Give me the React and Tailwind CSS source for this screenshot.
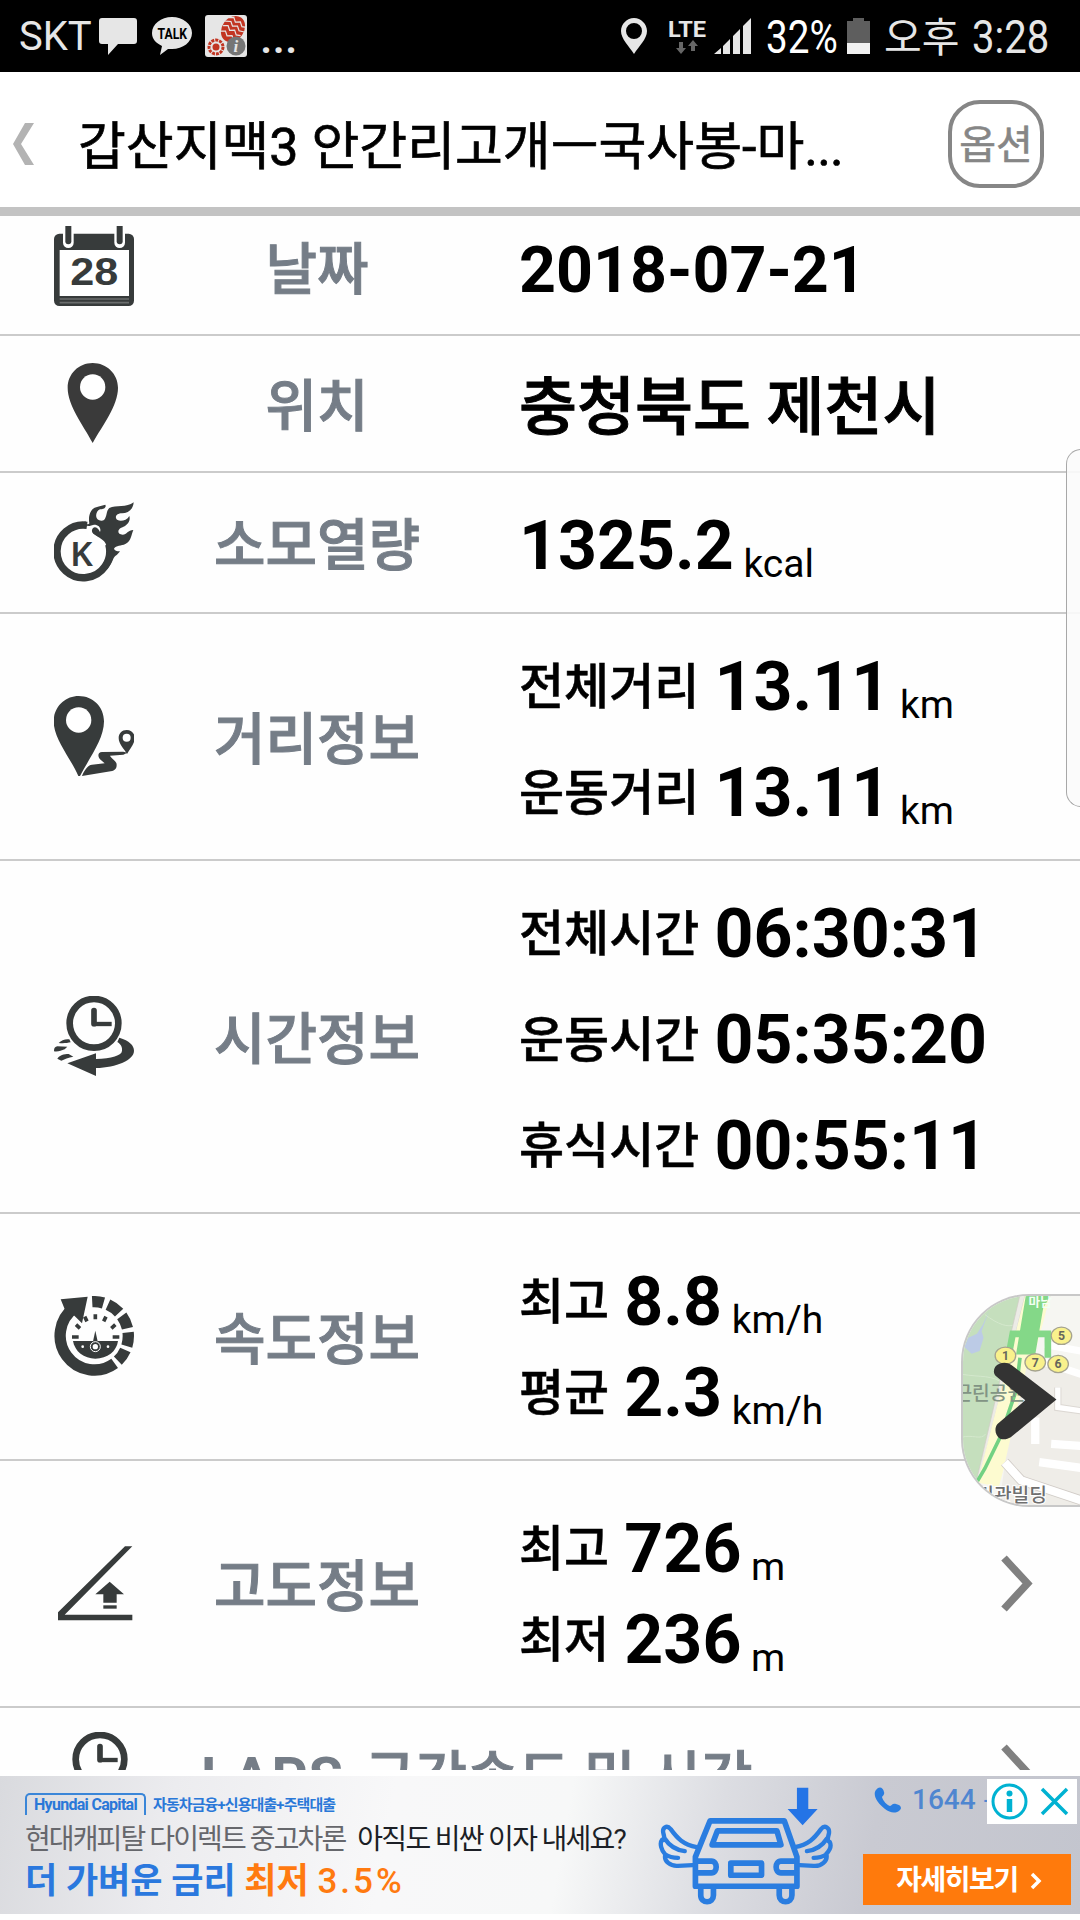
import React from "react";
import { clsx } from "clsx";

const INK = "#373b3b";

/* Arc between two angles, measured clockwise from 12 o'clock */
const arc = (cx, cy, r, from, to) => {
  const point = (deg) => {
    const rad = ((deg - 90) * Math.PI) / 180;
    return `${(cx + r * Math.cos(rad)).toFixed(1)} ${(cy + r * Math.sin(rad)).toFixed(1)}`;
  };
  const large = to - from > 180 ? 1 : 0;
  return `M${point(from)} A${r} ${r} 0 ${large} 1 ${point(to)}`;
};

const CalendarIcon = () => (
  <svg viewBox="0 0 240 240" className="size-20">
    <rect x="0" y="23" width="240" height="217" rx="16" fill={INK} />
    <rect x="17" y="72" width="208" height="138" fill="#fff" />
    <path d="M17 219H225M17 230H225" stroke="#6b6e6e" strokeWidth="5" />
    {[43, 197].map((x) => (
      <g key={x} strokeLinecap="round">
        <path d={`M${x} -20V50`} stroke="#fff" strokeWidth="32" />
        <path d={`M${x} -20V46`} stroke={INK} strokeWidth="18" />
      </g>
    ))}
    <text
      x="49"
      y="178"
      fontSize="116"
      textLength="144"
      lengthAdjust="spacingAndGlyphs"
      fill={INK}
      className="font-['Liberation_Sans',sans-serif] font-bold"
    >
      28
    </text>
  </svg>
);

const PinIcon = () => (
  <svg viewBox="0 0 240 240" className="size-20">
    <path
      d="M116 0C158 0 192 33 192 74C192 128 146 186 116 240C88 186 41 128 41 74C41 33 74 0 116 0Z"
      fill="#3a3a3a"
    />
    <circle cx="116" cy="72" r="38" fill="#fff" />
  </svg>
);

const CalorieIcon = () => (
  <svg viewBox="0 0 240 240" className="size-20">
    <path d={arc(88, 148, 79, 76, 368)} fill="none" stroke={INK} strokeWidth="22" />
    <path
      d="M94 56C84 62 102 72 106 64C104 52 104 38 112 26C122 12 138 14 154 8C158 16 150 22 138 22C128 26 124 40 128 48C132 56 144 58 150 54C160 44 156 26 166 18C186 8 218 18 239 1C238 22 222 34 204 34C192 34 184 40 186 48C188 60 216 60 226 42C232 62 212 74 200 78C190 84 190 98 206 98C218 98 222 84 238 84C232 96 232 118 214 126C202 132 186 130 180 140C184 148 192 148 198 148C190 160 184 160 178 170C172 186 162 202 152 206L154 176L160 140C150 122 144 114 136 112C126 98 112 98 114 84C118 70 132 76 138 90C142 80 136 68 120 68C108 70 100 78 96 70Z"
      fill={INK}
    />
    <path d="M104 72C100 90 112 100 126 106C134 112 150 118 152 130" fill="none" stroke="#fff" strokeWidth="9" />
    <text
      x="52"
      y="192"
      fontSize="104"
      textLength="66"
      lengthAdjust="spacingAndGlyphs"
      fill={INK}
      className="font-['Liberation_Sans',sans-serif] font-bold"
    >
      K
    </text>
  </svg>
);

const DistanceIcon = () => (
  <svg viewBox="0 0 240 240" className="size-20" fill={INK}>
    <path d="M74 0C117 0 150 33 150 76C150 130 106 186 78 240H73C50 186 -1 130 -1 76C-1 33 33 0 74 0Z" />
    <circle cx="74" cy="72" r="38" fill="#fff" />
    <path d="M84 240C90 224 102 206 114 206L152 202L138 190C130 180 132 168 144 168L208 167L220 170L208 176L168 179C172 188 188 194 188 206C188 218 184 222 170 226L84 240Z" />
    <path d="M218 102C232 102 242 112 242 126C242 144 228 158 219 174C210 158 194 144 194 126C194 112 204 102 218 102Z" />
    <circle cx="218" cy="125" r="12" fill="#fff" />
  </svg>
);

const TimeIcon = () => (
  <svg viewBox="0 0 240 240" className="size-20" fill={INK}>
    <circle cx="120" cy="82" r="73" fill="none" stroke={INK} strokeWidth="20" />
    <path d="M120 44V83" stroke={INK} strokeWidth="17" strokeLinecap="round" />
    <path d="M118 84H173" stroke={INK} strokeWidth="13" />
    <path d="M196 125C226 134 240 148 240 164C240 192 188 214 126 216V240L40 202L126 172V189C172 188 204 178 204 164C206 154 200 144 190 138Z" />
    <path d="M14 141C22 133 34 128 46 130L50 139C40 141 28 143 14 141ZM0 164C0 156 4 152 10 151L40 152L32 160C22 164 12 168 0 166ZM10 188C16 178 30 174 44 174L58 182C44 184 30 190 22 194Z" />
  </svg>
);

const SpeedIcon = () => (
  <svg viewBox="0 0 240 240" className="size-20">
    <g fill="none" stroke={INK} strokeWidth="34">
      <path d={arc(120, 120, 103, 143, 325)} />
      <path d={arc(120, 120, 103, -3, 16)} />
      <path d={arc(120, 120, 103, 24, 47)} />
      <path d={arc(120, 120, 103, 54, 77)} />
      <path d={arc(120, 120, 103, 84, 107)} />
      <path d={arc(120, 120, 103, 114, 136)} />
    </g>
    <path d="M20 10L101 2L84 82L58 56L42 64Z" fill={INK} />
    <path d="M57 135H192C188 166 160 188 124 188C90 188 62 166 57 135Z" fill={INK} />
    <g stroke={INK} strokeWidth="11">
      <path d="M124 55V70M92 62L99 76M156 62L149 76M66 86L78 97M184 86L172 97M54 123H74M176 123H196" />
    </g>
    <path d="M124 104L134 150H114Z" fill={INK} />
    <circle cx="124" cy="152" r="15" fill={INK} stroke="#fff" strokeWidth="3" />
    <circle cx="124" cy="152" r="8" fill="#fff" />
    <circle cx="86" cy="152" r="4" fill="#fff" />
    <circle cx="162" cy="152" r="4" fill="#fff" />
  </svg>
);

const AltitudeIcon = () => (
  <svg viewBox="0 0 240 240" className="size-20" fill={INK}>
    <path d="M12 232V208L213 10H235L32 215H235V232Z" />
    <path d="M167 116L210 154H188V179H148V154H124Z" />
    <rect x="148" y="187" width="40" height="10" />
  </svg>
);

const ChevronIcon = () => (
  <svg viewBox="0 0 34 60" className="h-15 w-[34px]">
    <path d="M4 5L27.500 30.500L4 56" fill="none" stroke="#808080" strokeWidth="7.500" />
  </svg>
);

const ROWS = [
  { icon: CalendarIcon, label: "날짜", height: "h-[137px]", lines: [{ value: "2018-07-21", style: "text-[64.5px] font-bold" }] },
  {
    icon: PinIcon,
    label: "위치",
    height: "h-[137px]",
    lines: [{ value: "충청북도 제천시", style: "pt-0.5 text-[63px] font-medium [-webkit-text-stroke:1px_black]" }],
  },
  { icon: CalorieIcon, label: "소모열량", height: "h-[141px]", lines: [{ value: "1325.2", unit: "kcal" }] },
  {
    icon: DistanceIcon,
    label: "거리정보",
    height: "h-[247px]",
    lines: [
      { name: "전체거리", value: "13.11", unit: "km" },
      { name: "운동거리", value: "13.11", unit: "km" },
    ],
  },
  {
    icon: TimeIcon,
    label: "시간정보",
    height: "h-[353px]",
    lines: [
      { name: "전체시간", value: "06:30:31" },
      { name: "운동시간", value: "05:35:20" },
      { name: "휴식시간", value: "00:55:11" },
    ],
  },
  {
    icon: SpeedIcon,
    label: "속도정보",
    height: "h-[247px]",
    compact: true,
    lines: [
      { name: "최고", value: "8.8", unit: "km/h" },
      { name: "평균", value: "2.3", unit: "km/h" },
    ],
  },
  {
    icon: AltitudeIcon,
    label: "고도정보",
    height: "h-[247px]",
    compact: true,
    link: true,
    lines: [
      { name: "최고", value: "726", unit: "m" },
      { name: "최저", value: "236", unit: "m" },
    ],
  },
];

const InfoRow = ({ row }) => {
  const Icon = row.icon;
  return (
    <div className={clsx("flex shrink-0 items-center border-b-2 border-[#cbcbcb] pb-px", row.height)}>
      <div className="w-[188px] pl-[54px]">
        <Icon />
      </div>
      <div className="w-[258px] pt-[7px] text-center text-[56px] leading-none font-medium text-[#757d87] [-webkit-text-stroke:1px_#757d87]">
        {row.label}
      </div>
      <div className={clsx("flex-1 pl-[73px] whitespace-pre", row.compact ? "pt-[23px]" : "pt-[7px]")}>
        {row.lines.map((line, index) => (
          <p
            key={index}
            className={clsx(line.style || "text-[68px] font-bold", row.compact ? "leading-[91px]" : "leading-[106px]")}
          >
            {line.name && (
              <span className="mr-[3px] align-[6px] text-[49px] leading-none font-medium [-webkit-text-stroke:0.5px_black]">
                {line.name}{" "}
              </span>
            )}
            {line.value}
            {line.unit && <span className="align-[-8px] text-[39px] leading-none font-normal"> {line.unit}</span>}
          </p>
        ))}
      </div>
      {row.link && (
        <div className="pr-[46px]">
          <ChevronIcon />
        </div>
      )}
    </div>
  );
};

const StatusBar = () => (
  <div className="flex h-18 shrink-0 items-center bg-black pl-[19px] text-[#e6e6e6]">
    <span className="w-20 pt-0.5 text-[40px] leading-[70px]">SKT</span>
    <svg viewBox="0 0 38 38" className="mt-0.5 h-[38px] w-[38px] fill-[#e6e6e6]">
      <path d="M3 0H35Q38 0 38 3V23Q38 26 35 26H19L9 37V26H3Q0 26 0 23V3Q0 0 3 0Z" />
    </svg>
    <svg viewBox="0 0 40 40" className="ml-[15px] h-10 w-10">
      <path d="M20 1C31 1 40 8 40 17C40 26 31 33 20 33L16 33L8 39L10 30C4 27 0 23 0 17C0 8 9 1 20 1Z" fill="#e6e6e6" />
      <text x="5.500" y="22.500" fontSize="15" textLength="29.500" lengthAdjust="spacingAndGlyphs" className="font-bold">
        TALK
      </text>
    </svg>
    <svg viewBox="0 0 42 42" className="ml-[13px] size-[42px]">
      <rect width="42" height="42" rx="3" fill="#e6e6e6" />
      <g transform="rotate(35 28 14)">
        <ellipse cx="28" cy="14" rx="11" ry="14" fill="#c23522" />
        <path
          d="M18 7L22 4L26 7L30 4L34 7L38 5M17 12L22 9L26 12L30 9L34 12L39 10M18 17L22 14L26 17L30 14L34 17L38 15M19 23L23 20L27 23L31 20L35 23"
          fill="none"
          stroke="#e6e6e6"
          strokeWidth="1.200"
        />
      </g>
      <circle cx="11" cy="32" r="7" fill="none" stroke="#c23522" strokeWidth="3" strokeDasharray="3 1" />
      <circle cx="11" cy="32" r="3.500" fill="#c23522" />
      <circle cx="31" cy="31" r="9.500" fill="#757575" />
      <text x="28.500" y="37" fontSize="17" fill="#e6e6e6" className="font-['Liberation_Serif',serif] font-bold italic">
        i
      </text>
    </svg>
    <span className="ml-[13px] pt-1 text-[45px] leading-[68px] font-medium">...</span>

    <div className="ml-auto flex items-center pr-8">
      <svg viewBox="0 0 26 36" className="h-9 w-[26px]">
        <path
          d="M13 0C20 0 26 6 26 13C26 21 18 28 13 36C8 28 0 21 0 13C0 6 6 0 13 0ZM13 5A8 8 0 1 0 13 21A8 8 0 1 0 13 5Z"
          fill="#e6e6e6"
        />
      </svg>
      <div className="ml-[21px] flex w-[38px] flex-col items-center gap-[3px] pt-px">
        <svg viewBox="0 0 38 17" className="h-[17px] w-[38px] overflow-visible">
          <text
            x="0"
            y="16.500"
            fontSize="22.500"
            textLength="38"
            lengthAdjust="spacingAndGlyphs"
            fill="#e6e6e6"
            className="font-bold"
          >
            LTE
          </text>
        </svg>
        <svg viewBox="0 0 22 14" className="h-3.5 w-[22px] fill-[#666]">
          <path d="M3 2H7V8H10L5 14L0 8H3ZM15 11H19V6H22L17 0L12 6H15Z" />
        </svg>
      </div>
      <svg viewBox="0 0 37 36" className="ml-2 h-9 w-[37px] fill-[#e6e6e6]">
        <path d="M0 36L7 30V36ZM9 28L16 21V36H9ZM19 18L26 11V36H19ZM29 8L37 0V36H29Z" />
      </svg>
      <span className="ml-[15px] w-[75px] pt-0.5 text-[46px] leading-[70px] text-white">
        <span className="inline-block origin-left scale-x-[0.840]">32%</span>
      </span>
      <svg viewBox="0 0 23 36" className="ml-1.5 h-9 w-[23px]">
        <path d="M6 0H17V3H23V36H0V3H6Z" fill="#5e5e5e" />
        <path d="M0 25H23V36H0Z" fill="#f0f0f0" />
      </svg>
      <span className="ml-[14px] w-[88px] pt-1 text-[41px] leading-[68px]">오후</span>
      <span className="w-[76px] pt-0.5 text-[46px] leading-[70px]">
        <span className="inline-block origin-left scale-x-[0.870]">3:28</span>
      </span>
    </div>
  </div>
);

const Header = () => (
  <div className="flex h-36 shrink-0 items-center border-b-[9px] border-[#c3c3c3] bg-white pt-[9px] pr-9 pl-[13px]">
    <svg viewBox="0 0 21 42" className="h-[42px] w-[21px] fill-[#b3b3b3]">
      <path d="M12 0H21L8 21L21 42H12L0 21Z" />
    </svg>
    <h1 className="ml-11 flex-1 pt-2 text-[52px] leading-none whitespace-nowrap [-webkit-text-stroke:0.7px_black]">
      갑산지맥3 안간리고개ㅡ국사봉-마<span className="tracking-[-0.800px]">...</span>
    </h1>
    <button className="flex h-[88px] w-24 items-center justify-center rounded-[32px] border-4 border-[#868686] pt-1 text-[40px] leading-none text-[#868686] [-webkit-text-stroke:0.6px_#868686]">
      옵션
    </button>
  </div>
);

const STATIONS = [
  { n: 5, x: 301, y: 124 },
  { n: 1, x: 132, y: 184 },
  { n: 7, x: 222, y: 204 },
  { n: 6, x: 291, y: 209 },
];

const MapTab = () => (
  <div className="absolute top-[1294px] right-0 h-[213px] w-[119px] overflow-hidden rounded-l-[68px] border-2 border-r-0 border-[#c8c8c8] bg-[#f6f6f2]">
    <svg viewBox="4 4 353 630" className="h-full w-full" preserveAspectRatio="none">
      <path d="M0 0H182L44 600L0 640Z" fill="#c5dfbd" />
      <path d="M82 50L64 90L46 118L20 130L8 158L30 178L54 170L66 130L60 110Z" fill="#bccbe6" />
      <path d="M70 60C110 90 140 100 160 90M0 240C60 250 90 240 130 270M0 430C30 420 60 440 72 420" fill="none" stroke="#d4e8cd" strokeWidth="3" />
      <path d="M176 0H192L50 570L40 580Z" fill="#ecebe6" stroke="#cfcac4" strokeWidth="2" />
      <path d="M192 0H268L112 580L48 566Z" fill="#fdfbd0" />
      <path d="M200 200L360 236V640H112L132 500Z" fill="#efede8" />
      <path d="M250 150L360 170M240 200L360 240" stroke="#fff" strokeWidth="22" />
      <path d="M130 505L180 560L360 620" fill="none" stroke="#d2cdc8" strokeWidth="30" />
      <path d="M290 280V340L360 350" fill="none" stroke="#dcd8d3" strokeWidth="22" />
      <path d="M130 505L180 560L360 620M222 370V450M270 450L360 456M234 505L360 522" fill="none" stroke="#fff" strokeWidth="25" />
      <path d="M290 280V340L360 350" fill="none" stroke="#fff" strokeWidth="16" />
      <path d="M176 190L164 290L116 430L70 524L44 568" fill="none" stroke="#72d183" strokeWidth="11" />
      <path d="M194 0H270L246 40L222 180H164Z" fill="#84d888" />
      <path d="M142 182L154 118H260V190" fill="none" stroke="#84d888" strokeWidth="20" />
      <g className="font-['Noto_Sans_CJK_KR',sans-serif]">
        <text x="202" y="34" fontSize="38" fill="#f4fff4" className="font-bold">
          마남
        </text>
        <text x="-22" y="316" fontSize="58" fill="#829484" className="font-medium">
          근린공원
        </text>
        <text x="44" y="626" fontSize="58" fill="#6f6f6f" stroke="#fff" strokeWidth="6" paintOrder="stroke" className="font-medium">
          리관빌딩
        </text>
      </g>
      {STATIONS.map(({ n, x, y }) => (
        <g key={n}>
          <ellipse cx={x} cy={y} rx="31" ry="26" fill="#f9f18c" stroke="#a5a38e" strokeWidth="4" />
          <text x={x} y={y + 13} fontSize="37" textAnchor="middle" fill="#66665c" className="font-bold">
            {n}
          </text>
        </g>
      ))}
      <path
        d="M114 208C96 214 92 236 104 246L192 318L108 390C98 402 100 424 116 434C126 438 138 436 148 430L286 316L150 212C138 204 126 204 114 208Z"
        fill="#333"
      />
    </svg>
  </div>
);

const CarIcon = () => (
  <svg viewBox="24 40 524 362" className="h-[121px] w-[175px]" fill="none" stroke="#2a7de0" strokeWidth="17" strokeLinejoin="round" strokeLinecap="round">
    <path d="M440 48H474V112H502L457 160L412 112H440Z" fill="#2474e6" stroke="none" />
    <path d="M180 147H402L440 255V343H136V255Z" />
    <path d="M202 177H380L392 219H186Z" />
    <path d="M138 268H184C203 268 203 303 184 303H138M438 268H392C373 268 373 303 392 303H438" />
    <rect x="242" y="274" width="92" height="36" />
    <path d="M152 348V370C152 396 190 396 190 370V348M387 348V370C387 396 425 396 425 370V348" />
    <path
      d="M140 226C100 218 82 200 62 172C50 158 36 168 40 184C44 200 46 208 36 204C28 214 34 236 46 248C40 268 62 284 84 282L128 280M44 200C58 222 74 234 104 238M46 248C58 256 68 258 84 258M434 226C474 218 492 200 512 172C524 158 538 168 536 184C532 200 530 208 538 210C544 222 538 236 528 246C534 268 512 284 490 282L448 280M530 200C516 222 500 234 470 238M528 248C516 256 506 258 490 258"
      strokeWidth="13"
    />
  </svg>
);

const AdBanner = () => (
  <div className="relative mt-1.5 mb-1.5 flex h-[138px] shrink-0 bg-[linear-gradient(100deg,#d9dade_0%,#ececef_16%,#f8f8f9_36%,#f7f8f8_52%,#dcdde2_66%,#c9cad2_80%,#c3c5ce_100%)]">
    <div className="w-[658px] pl-[25px] whitespace-nowrap">
      <div className="mt-[17px] flex h-[22px] items-center text-[#2a78d8]">
        <span className="flex h-[22px] w-[121px] shrink-0 items-center justify-center rounded-t-[5px] border-2 border-b-0 border-[#3a86d8] text-[16px] leading-none font-bold tracking-[-0.700px]">
          Hyundai Capital
        </span>
        <span className="ml-[7px] pt-0.5 text-[15px] leading-none font-bold tracking-[-0.900px]">
          자동차금융+신용대출+주택대출
        </span>
      </div>
      <div className="mt-1.5 text-[28px] leading-[38px] tracking-[-1.900px] text-[#1c1f26]">
        <span className="text-[#66676c]">현대캐피탈 다이렉트 중고차론</span>
        <span className="ml-3 tracking-[-1.700px]">아직도 비싼 이자 내세요?</span>
      </div>
      <div className="text-[35px] leading-[46px] font-bold text-[#2a78de]">
        더 가벼운 금리{" "}
        <span className="text-[#ff7a10]">
          최저 <span className="font-medium tracking-[3px]">3.5%</span>
        </span>
      </div>
    </div>
    <div className="pt-[9px]">
      <CarIcon />
    </div>
    <div className="flex flex-1 flex-col pt-[9px] pl-[30px]">
      <div className="flex h-[30px] items-center pl-[11px] text-[#4f86d0]">
        <svg viewBox="0 0 28 28" className="size-7 fill-[#2a7de0]">
          <path d="M2 4C5 0 9 1 10 6C11 9 8 10 8 11C9 15 13 19 16 20C18 20 18 17 22 18C27 19 28 22 26 24C22 28 16 27 11 23C4 18 -2 9 2 4Z" />
        </svg>
        <span className="ml-2.5 text-[28px] leading-none font-medium">1644</span>
        <span className="ml-2 text-[28px] leading-none">-</span>
      </div>
      <button className="mt-[39px] flex h-[51px] w-[208px] items-center justify-center gap-3 bg-[#ff7a0c] pt-0.5 pl-1 text-[28px] leading-none font-bold tracking-[-1.500px] text-white">
        자세히보기
        <svg viewBox="0 0 12 18" className="h-[18px] w-3">
          <path d="M2 2L9 9L2 16" fill="none" stroke="#fff" strokeWidth="3.500" />
        </svg>
      </button>
    </div>
    <div className="absolute top-[3px] right-[3px] flex h-[45px] w-[90px] items-center bg-white">
      <svg viewBox="0 0 90 45" className="h-full w-full" fill="none" stroke="#00b2d2">
        <circle cx="22.500" cy="22.500" r="16.500" strokeWidth="3" />
        <circle cx="22.500" cy="14.500" r="3" fill="#00b2d2" stroke="none" />
        <path d="M22.500 20V33" strokeWidth="5.500" />
        <path d="M55 10L80 35M80 10L55 35" strokeWidth="3.500" />
      </svg>
    </div>
  </div>
);

export default function App() {
  return (
    <div className="relative flex h-[1920px] w-[1080px] flex-col overflow-hidden bg-white font-[Roboto,'Noto_Sans_CJK_KR',sans-serif] text-black">
      <StatusBar />
      <Header />
      <div className="flex h-[1554px] shrink-0 flex-col overflow-hidden bg-[#fefefe]">
        <div className="-mt-[17px] flex flex-col">
          {ROWS.map((row) => (
            <InfoRow key={row.label} row={row} />
          ))}
          <div className="flex h-[130px] items-center pr-[46px] pb-0.5 pl-[60px] text-[56px] leading-none text-[#757d87]">
            <TimeIcon />
            <span className="ml-[61px] flex-1 pt-3 font-medium whitespace-nowrap [-webkit-text-stroke:1px_#757d87]">
              <span className="mr-1.5 font-bold tracking-[1px] [-webkit-text-stroke:0px]">LAPS</span> 구간속도 및 시간
            </span>
            <ChevronIcon />
          </div>
        </div>
      </div>
      <AdBanner />
      <div className="absolute top-[449px] -right-px h-[358px] w-[15px] rounded-l-[20px] border border-[#a8a8a8] bg-[#fbfbfb]/90" />
      <MapTab />
    </div>
  );
}
